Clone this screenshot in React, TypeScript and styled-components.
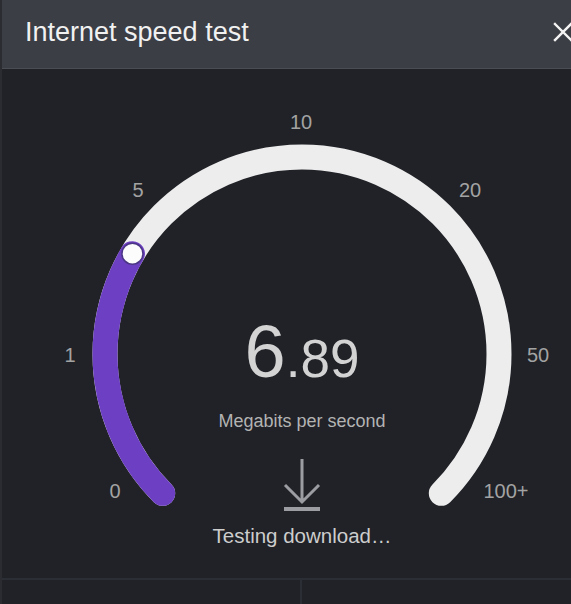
import styled, { createGlobalStyle } from "styled-components";

const GlobalStyle = createGlobalStyle`
  html, body {
    margin: 0;
    padding: 0;
    background: #202227;
  }
  body {
    font-family: "Liberation Sans", Arial, sans-serif;
  }
`;

const Dialog = styled.div`
  width: 571px;
  height: 604px;
  overflow: hidden;
  display: flex;
  flex-direction: column;
  background: #202227;
  border-left: 2px solid #2a2c31;
  box-sizing: border-box;
`;

const Header = styled.div`
  height: 68px;
  flex: none;
  display: flex;
  align-items: center;
  justify-content: space-between;
  padding-left: 23px;
  background: #3b3e45;
  border-bottom: 1px solid #4a4d54;
`;

const Title = styled.h1`
  margin: 0 0 3px;
  font-size: 27px;
  font-weight: 400;
  color: #f1f1f1;
  letter-spacing: 0;
`;

const CloseButton = styled.button`
  width: 24px;
  height: 24px;
  margin-right: -4px;
  margin-bottom: 4px;
  padding: 0;
  border: 0;
  background: none;
  display: flex;
  align-items: center;
  justify-content: center;
`;

const Body = styled.div`
  height: 509px;
  flex: none;
  display: grid;
`;

const GaugeSvg = styled.svg`
  grid-area: 1 / 1;
  width: 569px;
  height: 509px;
  margin-left: -2px;
`;

// the gauge sits a little right of the dialog's middle, so the readout is pushed with it
const Readout = styled.div`
  grid-area: 1 / 1;
  display: flex;
  flex-direction: column;
  align-items: center;
  padding-top: 246px;
  padding-left: 31px;
`;

const Speed = styled.div`
  height: 74px;
  display: flex;
  align-items: baseline;
  color: #d3d3d3;
  line-height: 74px;
`;

const SpeedWhole = styled.span`
  font-size: 74px;
`;

const SpeedFraction = styled.span`
  font-size: 53px;
`;

const Unit = styled.div`
  margin-top: 22px;
  font-size: 18px;
  line-height: 20px;
  color: #b3b3b3;
`;

const IconBox = styled.div`
  margin-top: 25px;
  width: 40px;
  height: 56px;
  display: flex;
  justify-content: center;
`;

const Status = styled.div`
  margin-top: 12px;
  font-size: 20.5px;
  line-height: 24px;
  color: #cdcdcd;
`;

const Footer = styled.div`
  flex: 1;
  display: grid;
  grid-template-columns: 298px 1fr;
  border-top: 2px solid #2b2e34;
`;

const FooterCell = styled.div<{ divided?: boolean }>`
  border-left: ${(p) => (p.divided ? "2px solid #2b2e34" : "none")};
`;

const CX = 302;
const CY = 285;
const R = 197;

const polar = (deg: number) => {
  const a = (deg * Math.PI) / 180;
  return { x: CX + R * Math.cos(a), y: CY + R * Math.sin(a) };
};

const arcPath = (from: number, to: number) => {
  const s = polar(from);
  const e = polar(to);
  const large = to - from > 180 ? 1 : 0;
  return `M ${s.x} ${s.y} A ${R} ${R} 0 ${large} 1 ${e.x} ${e.y}`;
};

const labels = [
  { text: "0", x: 115, y: 422 },
  { text: "1", x: 70, y: 286 },
  { text: "5", x: 138, y: 121 },
  { text: "10", x: 301, y: 53 },
  { text: "20", x: 470, y: 121 },
  { text: "50", x: 538, y: 286 },
  { text: "100+", x: 506, y: 422 },
];

function App() {
  const start = 135;
  const end = 405;
  const progress = 210.6;
  const knob = polar(progress);

  return (
    <>
      <GlobalStyle />
      <Dialog>
        <Header>
          <Title>Internet speed test</Title>
          <CloseButton aria-label="Close">
            <svg width="24" height="24" viewBox="0 0 24 24">
              <path
                d="M4 4 L20 20 M20 4 L4 20"
                stroke="#f4f4f4"
                strokeWidth="2.4"
                strokeLinecap="square"
              />
            </svg>
          </CloseButton>
        </Header>
        <Body>
          <GaugeSvg viewBox="0 0 569 509">
            <path
              d={arcPath(start, end)}
              fill="none"
              stroke="#ededed"
              strokeWidth="25"
              strokeLinecap="round"
            />
            <path
              d={arcPath(start, progress)}
              fill="none"
              stroke="#6d3fc2"
              strokeWidth="25"
              strokeLinecap="round"
            />
            <circle
              cx={knob.x}
              cy={knob.y}
              r="10.5"
              fill="#fcfcfc"
              stroke="#4b3585"
              strokeWidth="1.5"
            />
            {labels.map((l) => (
              <text
                key={l.text}
                x={l.x}
                y={l.y}
                textAnchor="middle"
                dominantBaseline="central"
                fontSize="20"
                fontFamily="Liberation Sans, Arial, sans-serif"
                fill="#a3a3a3"
              >
                {l.text}
              </text>
            ))}
          </GaugeSvg>
          <Readout>
            <Speed>
              <SpeedWhole>6</SpeedWhole>
              <SpeedFraction>.89</SpeedFraction>
            </Speed>
            <Unit>Megabits per second</Unit>
            <IconBox>
              <svg width="40" height="56" viewBox="0 0 40 56">
                <path
                  d="M20 3 V46 M3 29 L20 46 L37 29"
                  fill="none"
                  stroke="#9b9da3"
                  strokeWidth="3"
                />
                <rect x="2" y="51" width="36" height="4" fill="#9b9da3" />
              </svg>
            </IconBox>
            <Status>Testing download…</Status>
          </Readout>
        </Body>
        <Footer>
          <FooterCell />
          <FooterCell divided />
        </Footer>
      </Dialog>
    </>
  );
}

export default App;
